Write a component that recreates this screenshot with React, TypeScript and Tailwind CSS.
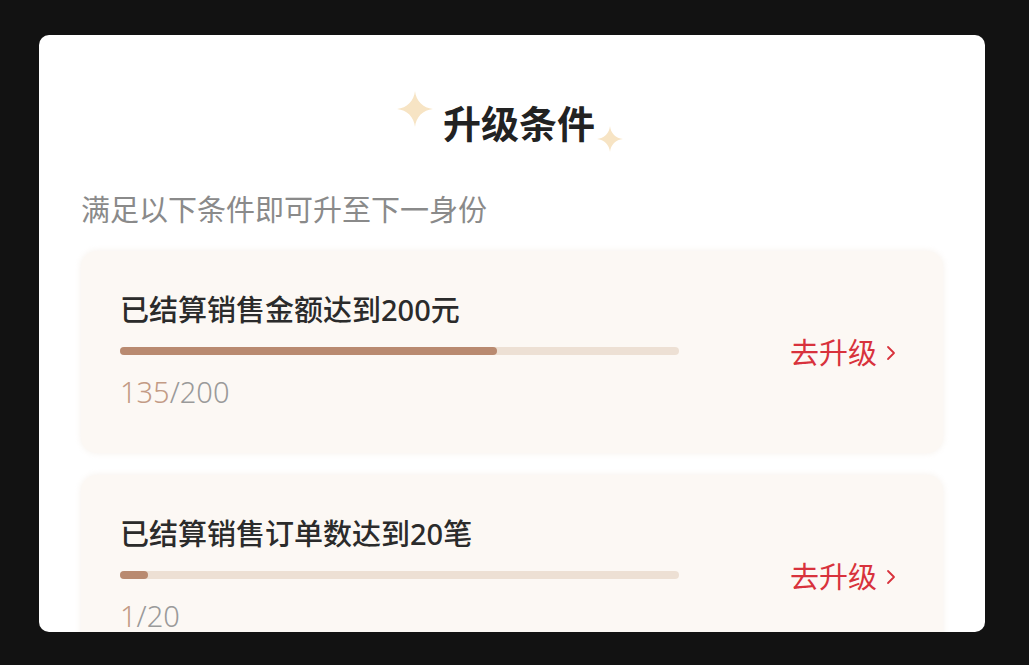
import React from 'react';

function Sparkle({ className }: { className: string }) {
  return (
    <svg className={className} viewBox="0 0 24 24" xmlns="http://www.w3.org/2000/svg">
      <path d="M12 0C12.6 6.6 17.4 11.4 24 12C17.4 12.6 12.6 17.4 12 24C11.4 17.4 6.6 12.6 0 12C6.6 11.4 11.4 6.6 12 0Z" fill="#f7e4c4" />
    </svg>
  );
}

function Chevron() {
  return (
    <svg className="w-[12px] h-[18px] ml-[8px] mt-[4px]" viewBox="0 0 12 18" fill="none" xmlns="http://www.w3.org/2000/svg">
      <path d="M3 3L9 9L3 15" stroke="#d8323c" strokeWidth="1.8" strokeLinecap="round" strokeLinejoin="round" />
    </svg>
  );
}

type Cond = { title: string; done: number; total: number };

function ConditionCard({ item }: { item: Cond }) {
  const pct = Math.max((item.done / item.total) * 100, 5);
  return (
    <div className="flex items-center bg-[#fcf8f4] rounded-[16px] pl-[39px] pr-[46px] pt-[41px] pb-[43px] shadow-[0_0_6px_rgba(240,230,220,0.6)]">
      <div className="w-[559px]" style={{ fontFamily: '"Noto Sans", "Noto Sans CJK SC", sans-serif' }}>
        <div className="text-[29px] leading-[36px] font-medium text-[#2b2b2b]">{item.title}</div>
        <div className="mt-[19px] h-[8px] rounded-full bg-[#ede0d4]">
          <div className="h-full rounded-full bg-[#b98a70]" style={{ width: `${pct}%` }} />
        </div>
        <div className="mt-[19px] text-[29px] leading-[36px] font-light text-[#9a9a9a]">
          <span className="text-[#c39b85]">{item.done}</span>/{item.total}
        </div>
      </div>
      <div className="ml-auto flex items-center text-[29px] leading-[36px] text-[#d8323c]">
        去升级
        <Chevron />
      </div>
    </div>
  );
}

export default function App() {
  const conds: Cond[] = [
    { title: '已结算销售金额达到200元', done: 135, total: 200 },
    { title: '已结算销售订单数达到20笔', done: 1, total: 20 },
  ];
  return (
    <div className="w-[1029px] h-[665px] bg-[#121212] pt-[35px] pl-[39px]" style={{ fontFamily: '"Noto Sans CJK SC", "Noto Sans", sans-serif' }}>
      <div className="w-[946px] h-[597px] bg-white rounded-[10px] overflow-hidden px-[42px] pt-[63px]">
        <div className="flex justify-center pl-[14px]">
          <div className="relative text-[38px] leading-[48px] font-bold text-[#222]">
            <Sparkle className="absolute left-[-46px] top-[-8px] w-[36px] h-[38px]" />
            <Sparkle className="absolute left-[154px] top-[28px] w-[26px] h-[26px]" />
            升级条件
          </div>
        </div>
        <div className="mt-[42px] text-[29px] leading-[40px] text-[#8a8a8a]">满足以下条件即可升至下一身份</div>
        <div className="mt-[23px] flex flex-col gap-[22px]">
          {conds.map((c) => (
            <ConditionCard key={c.title} item={c} />
          ))}
        </div>
      </div>
    </div>
  );
}
